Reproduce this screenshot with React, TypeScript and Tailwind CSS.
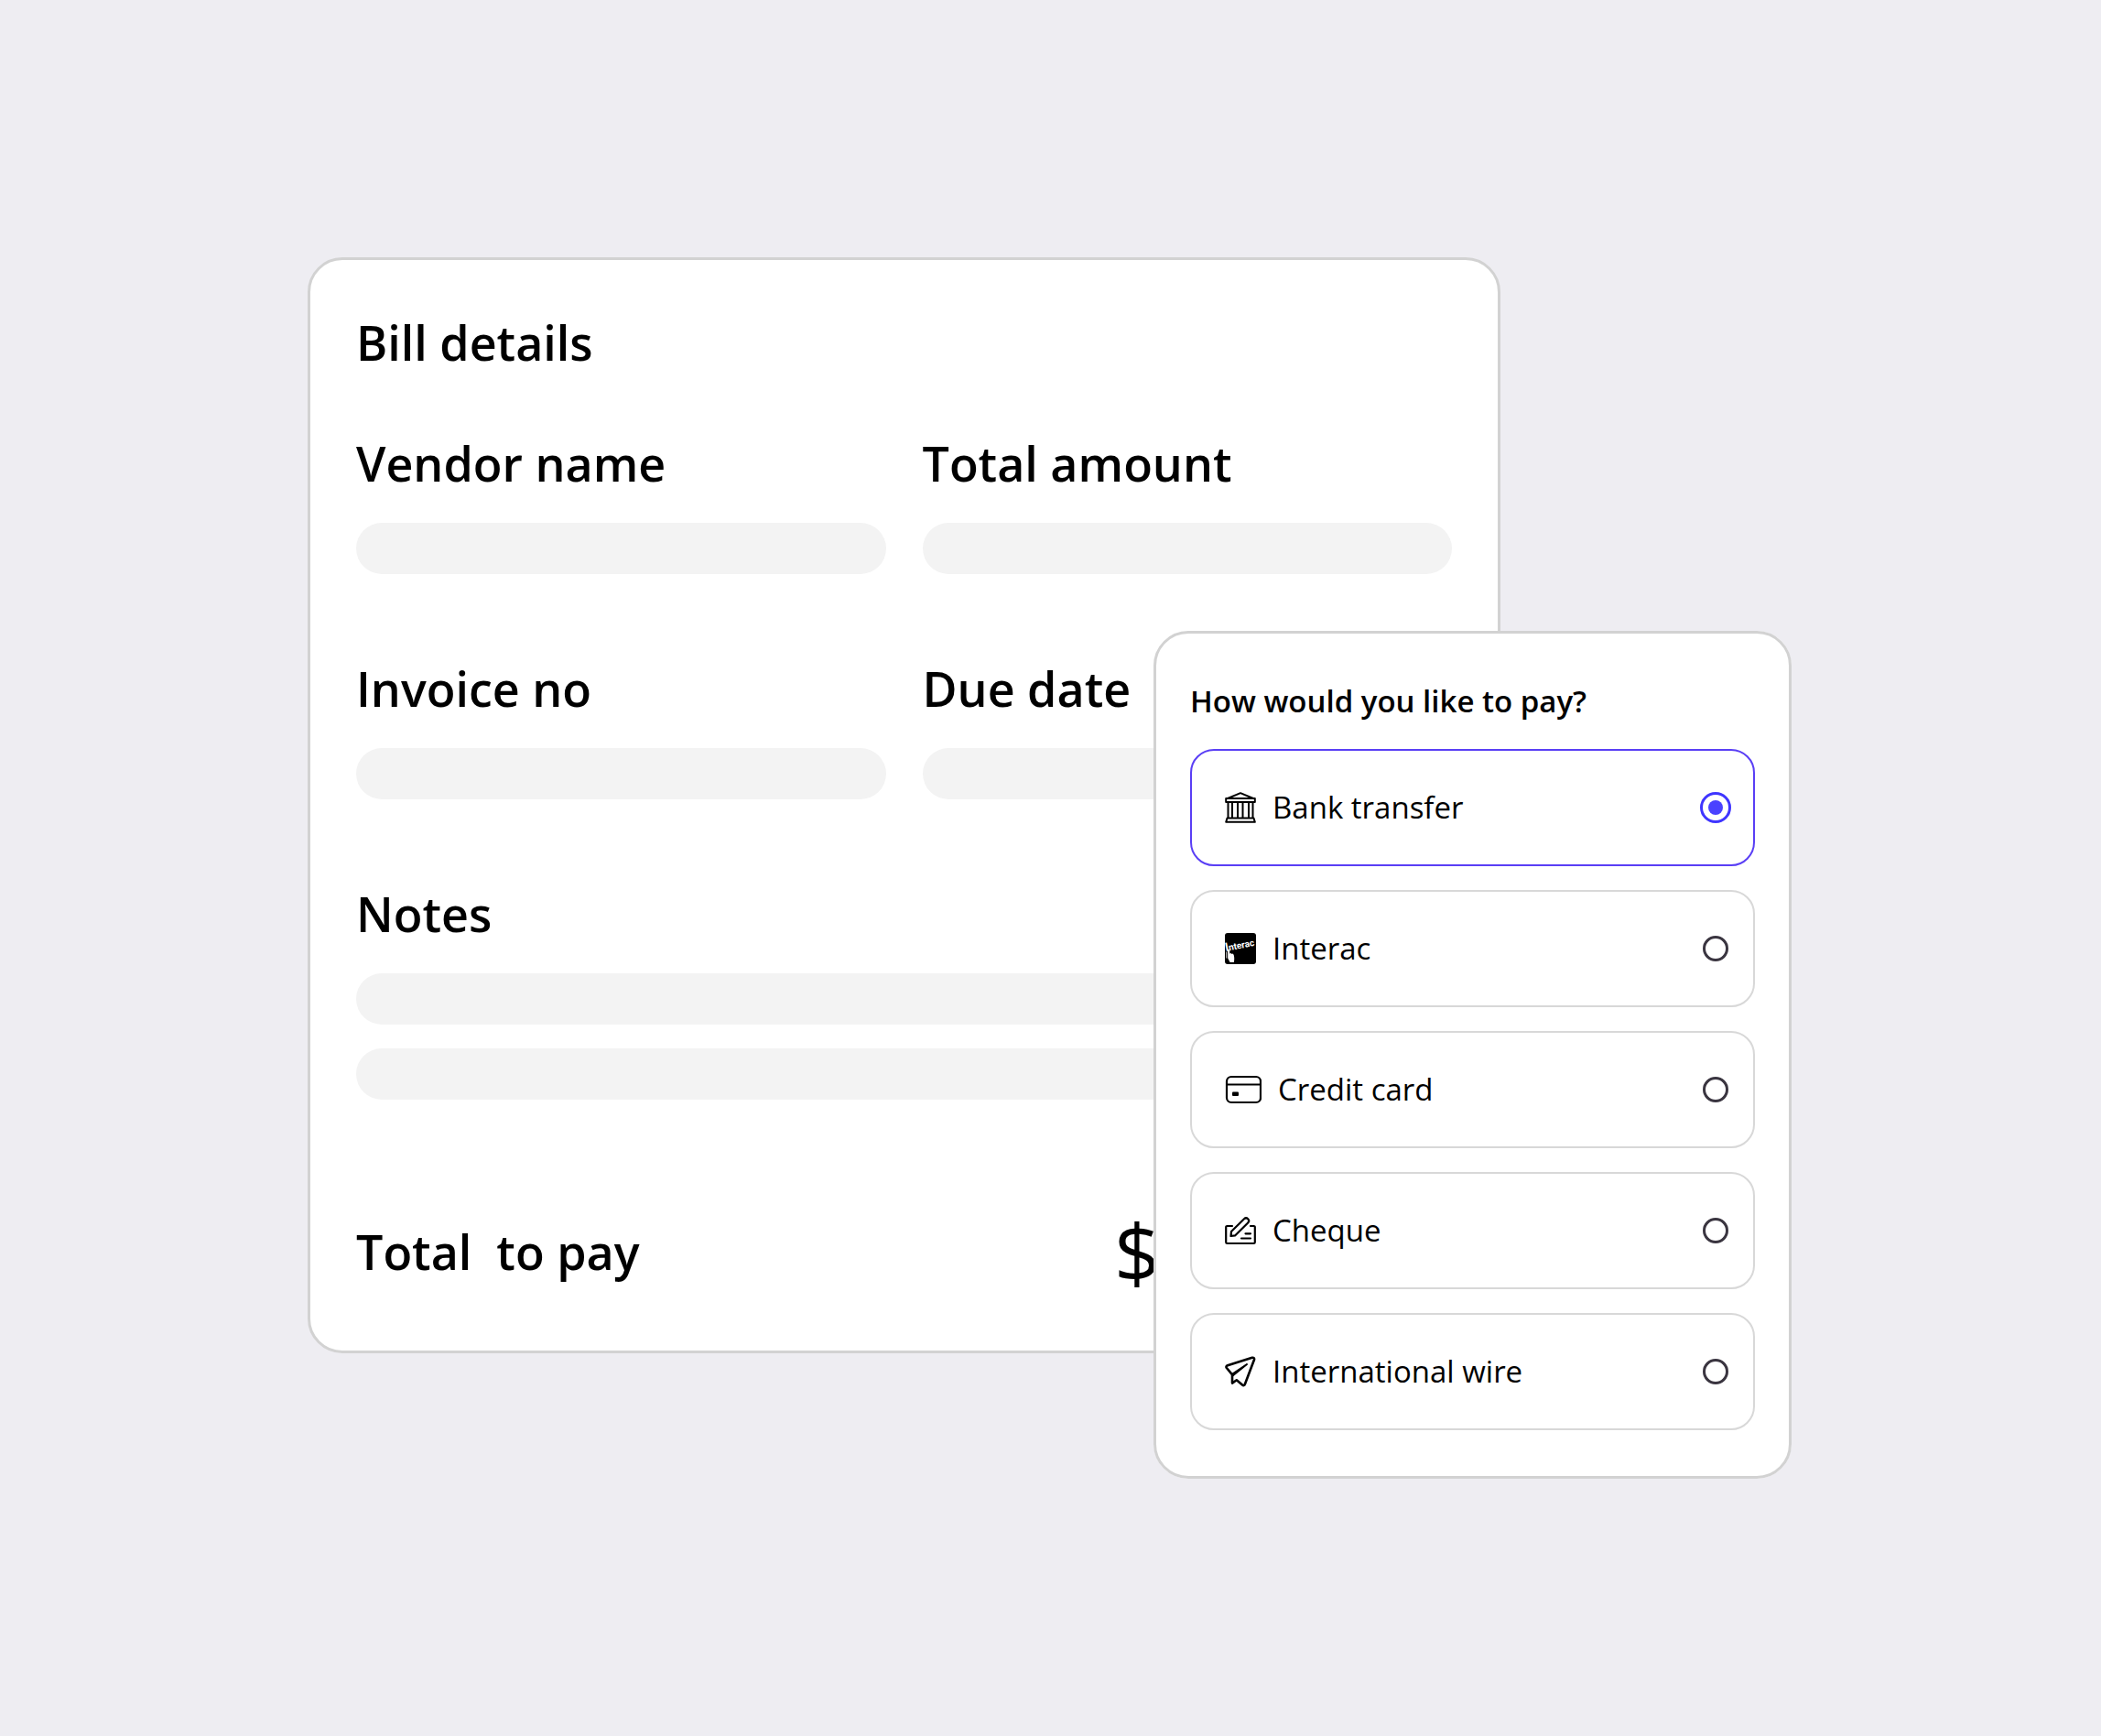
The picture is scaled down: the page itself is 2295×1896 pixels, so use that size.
import { useState } from "react";

function BankIcon() {
    return (
        <svg width="34" height="34" viewBox="0 0 34 34" fill="none" stroke="black" strokeWidth="2" strokeLinejoin="round">
            <path d="M3 7 17 1.2 31 7" />
            <path d="M1.2 7h31.6v4H1.2z" />
            <path d="M3.5 11v17.5M8 11v17.5M14 11v17.5M19.5 11v17.5M26 11v17.5M30.5 11v17.5" />
            <path d="M2.5 28.5h29l1.3 4.3H1.2z" />
        </svg>
    );
}

function InteracIcon() {
    return (
        <svg width="34" height="34" viewBox="0 0 34 34">
            <rect width="34" height="34" rx="3" fill="black" />
            <path
                d="M3.2 18h2v4.6l1.4-.6 1 1 1.2-.4.9 1.4c.7 2.500.7 5 .2 8H5.600L3.200 27.500z"
                fill="white"
            />
            <path d="M1.700 20.500v7" stroke="white" strokeWidth="0.8" />
            <text
                x="1"
                y="20"
                transform="rotate(-11 1 20)"
                className="font-['Roboto',sans-serif] text-[10px] font-bold"
                fill="white"
            >
                <tspan fontSize="13">I</tspan>nterac
            </text>
        </svg>
    );
}

function CardIcon() {
    return (
        <svg width="40" height="34" viewBox="0 0 40 34" fill="none" stroke="black" strokeWidth="2.2">
            <rect x="2" y="3" width="37" height="28" rx="5" />
            <path d="M2 11.5h37" />
            <rect x="8" y="19.5" width="7" height="4.5" rx="1" fill="black" stroke="none" />
        </svg>
    );
}

function ChequeIcon() {
    return (
        <svg
            width="34"
            height="34"
            viewBox="0 0 34 34"
            fill="none"
            stroke="black"
            strokeWidth="2.2"
            strokeLinecap="round"
            strokeLinejoin="round"
        >
            <path d="M8 12H2.5a1.3 1.3 0 0 0-1.3 1.3v16.4A1.3 1.3 0 0 0 2.5 31h29a1.3 1.3 0 0 0 1.3-1.3V13.3a1.3 1.3 0 0 0-1.3-1.3H28" />
            <path d="M6.500 23 7 18 21 4.300a2.900 2.900 0 0 1 4.200 4.200L11.300 22.300z" />
            <path d="M22.500 20.300H28M18 25.500H28" />
        </svg>
    );
}

function PlaneIcon() {
    return (
        <svg
            width="34"
            height="34"
            viewBox="0 0 34 34"
            fill="none"
            stroke="black"
            strokeWidth="2.6"
            strokeLinecap="round"
            strokeLinejoin="round"
        >
            <path d="M29.8 1.8 3 10.2c-1.6.6-1.900 1.700-1.100 2.800l6.100 7.300v9.300l4.800-3.300 6.200 5.200c1.200 1 2.500.7 2.900-.8L32 4c.4-1.600-.6-2.600-2.200-2.200z" />
            <path d="M24 9 8.500 21.500 8 19.800z" fill="black" strokeWidth="2" />
        </svg>
    );
}

const methods = [
    { id: "bank", label: "Bank transfer", icon: <BankIcon /> },
    { id: "interac", label: "Interac", icon: <InteracIcon /> },
    { id: "card", label: "Credit card", icon: <CardIcon /> },
    { id: "cheque", label: "Cheque", icon: <ChequeIcon /> },
    { id: "wire", label: "International wire", icon: <PlaneIcon /> },
];

function Bar() {
    return <div className="h-14 w-full rounded-full bg-[#f3f3f3]"></div>;
}

function Field({ label, bars = 1 }: { label: string; bars?: number }) {
    return (
        <div className="flex flex-col gap-[33px]">
            <h3>{label}</h3>
            <div className="flex flex-col gap-[26px]">
                {Array.from({ length: bars }, (_, i) => (
                    <Bar key={i} />
                ))}
            </div>
        </div>
    );
}

export default function App() {
    const [method, setMethod] = useState("bank");

    return (
        <main className="min-h-screen bg-[#eeedf2] flex justify-center items-center font-['Open_Sans',sans-serif] text-black">
            <div className="grid w-full max-w-[1623px]">
                <section className="[grid-area:1/1] self-start mr-[320px] rounded-[38px] border-3 border-[#d2d2d2] bg-white px-[50px] pt-[58px] pb-[76px] text-[52px] leading-[64px] font-semibold">
                    <h2 className="mb-[68px]">Bill details</h2>
                    <div className="grid grid-cols-2 gap-x-10 gap-y-[93px]">
                        <Field label="Vendor name" />
                        <Field label="Total amount" />
                        <Field label="Invoice no" />
                        <Field label="Due date" />
                        <div className="col-span-2">
                            <Field label="Notes" bars={2} />
                        </div>
                    </div>
                    <div className="mt-[134px] grid grid-cols-[828px_1fr] items-center">
                        <span className="whitespace-pre">Total  to pay</span>
                        <span className="text-[88px] font-normal">$</span>
                    </div>
                </section>

                <fieldset className="[grid-area:1/1] z-10 justify-self-end mt-[408px] mr-0.5 w-[697px] rounded-[38px] border-3 border-[#d2d2d2] bg-white px-[37px] pt-[54px] pb-[50px] text-[33px] leading-10">
                    <h2 id="pay-title" className="mb-8 font-semibold">
                        How would you like to pay?
                    </h2>
                    <div role="radiogroup" aria-labelledby="pay-title" className="flex flex-col gap-[26px]">
                        {methods.map((m) => (
                            <label
                                key={m.id}
                                className="flex h-32 items-center rounded-[26px] border-2 border-[#d8d8d8] pl-9 pr-6 has-[:checked]:border-[#5a3ff5]"
                            >
                                {m.icon}
                                <span className="ml-[18px] grow">{m.label}</span>
                                <span className="flex size-[34px] items-center justify-center">
                                    <input
                                        type="radio"
                                        name="method"
                                        value={m.id}
                                        checked={method === m.id}
                                        onChange={() => setMethod(m.id)}
                                        className="grid size-7 appearance-none place-items-center rounded-full border-3 border-[#3a3540] checked:size-[34px] checked:border-[#3f35ff] checked:before:size-4 checked:before:rounded-full checked:before:bg-[#4a42ff]"
                                    />
                                </span>
                            </label>
                        ))}
                    </div>
                </fieldset>
            </div>
        </main>
    );
}
